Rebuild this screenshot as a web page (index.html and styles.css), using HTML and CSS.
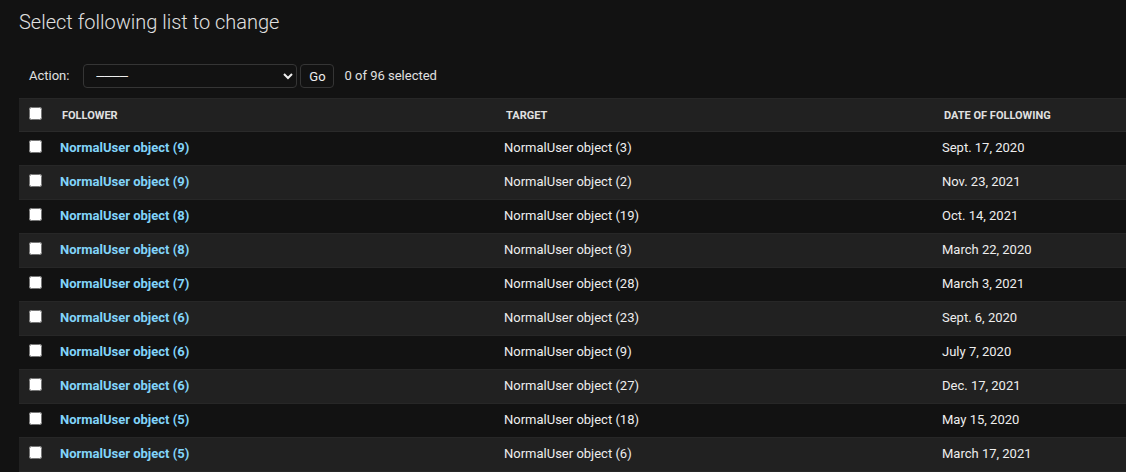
FILE: index.html
```html
<!DOCTYPE html>
<html lang="en">
<head>
<meta charset="utf-8">
<title>Select following list to change</title>
<link rel="stylesheet" href="styles.css">
</head>
<body>
<div class="content">
  <h1 class="title">Select following list to change</h1>
  <form class="changelist-form">
    <div class="actions">
      <label class="action-label">Action:
        <select class="action-select">
          <option>────</option>
        </select>
      </label>
      <button type="button" class="go-button">Go</button>
      <span class="action-counter">0 of 96 selected</span>
    </div>
    <table class="result-list">
      <colgroup>
        <col class="col-check">
        <col class="col-follower">
        <col class="col-target">
        <col class="col-date">
      </colgroup>
      <thead>
        <tr>
          <th class="check-cell"><input type="checkbox" class="cb"></th>
          <th>Follower</th>
          <th>Target</th>
          <th>Date of following</th>
        </tr>
      </thead>
      <tbody>
        <tr><td class="check-cell"><input type="checkbox" class="cb"></td><th class="link-cell"><a href="#">NormalUser object (9)</a></th><td>NormalUser object (3)</td><td>Sept. 17, 2020</td></tr>
        <tr><td class="check-cell"><input type="checkbox" class="cb"></td><th class="link-cell"><a href="#">NormalUser object (9)</a></th><td>NormalUser object (2)</td><td>Nov. 23, 2021</td></tr>
        <tr><td class="check-cell"><input type="checkbox" class="cb"></td><th class="link-cell"><a href="#">NormalUser object (8)</a></th><td>NormalUser object (19)</td><td>Oct. 14, 2021</td></tr>
        <tr><td class="check-cell"><input type="checkbox" class="cb"></td><th class="link-cell"><a href="#">NormalUser object (8)</a></th><td>NormalUser object (3)</td><td>March 22, 2020</td></tr>
        <tr><td class="check-cell"><input type="checkbox" class="cb"></td><th class="link-cell"><a href="#">NormalUser object (7)</a></th><td>NormalUser object (28)</td><td>March 3, 2021</td></tr>
        <tr><td class="check-cell"><input type="checkbox" class="cb"></td><th class="link-cell"><a href="#">NormalUser object (6)</a></th><td>NormalUser object (23)</td><td>Sept. 6, 2020</td></tr>
        <tr><td class="check-cell"><input type="checkbox" class="cb"></td><th class="link-cell"><a href="#">NormalUser object (6)</a></th><td>NormalUser object (9)</td><td>July 7, 2020</td></tr>
        <tr><td class="check-cell"><input type="checkbox" class="cb"></td><th class="link-cell"><a href="#">NormalUser object (6)</a></th><td>NormalUser object (27)</td><td>Dec. 17, 2021</td></tr>
        <tr><td class="check-cell"><input type="checkbox" class="cb"></td><th class="link-cell"><a href="#">NormalUser object (5)</a></th><td>NormalUser object (18)</td><td>May 15, 2020</td></tr>
        <tr><td class="check-cell"><input type="checkbox" class="cb"></td><th class="link-cell"><a href="#">NormalUser object (5)</a></th><td>NormalUser object (6)</td><td>March 17, 2021</td></tr>
      </tbody>
    </table>
  </form>
</div>
</body>
</html>
```

FILE: styles.css
```css
html, body {
  margin: 0;
  padding: 0;
  background: #121212;
  color: #eeeeee;
  font-family: Roboto, "DejaVu Sans", sans-serif;
  font-size: 13px;
  overflow: hidden;
}

.content {
  padding: 10px 0 0 19px;
}

.title {
  margin: 0 0 20px;
  font-size: 20px;
  line-height: 24px;
  font-weight: 300;
  color: #e0e0e0;
}

.changelist-form {
  margin: 0;
}

.actions {
  display: flex;
  align-items: center;
  padding: 10px;
  height: 24px;
  color: #e0e0e0;
  line-height: 24px;
}

.action-label {
  display: flex;
  align-items: center;
  gap: 14px;
  font-size: 13px;
}

.action-select {
  color-scheme: dark;
  box-sizing: border-box;
  width: 214px;
  height: 24px;
  margin: 0;
  padding: 0 6px 0 8px;
  background: #121212;
  color: #eeeeee;
  border: 1px solid #353535;
  border-radius: 4px;
  font-family: "DejaVu Sans", Roboto, sans-serif;
  font-size: 13px;
}

.go-button {
  box-sizing: border-box;
  height: 24px;
  width: 34px;
  margin: 0 0 0 3px;
  padding: 2px 0 0;
  background: #121212;
  color: #eeeeee;
  border: 1px solid #353535;
  border-radius: 4px;
  font-family: Roboto, "DejaVu Sans", sans-serif;
  font-size: 13px;
  line-height: 20px;
}

.action-counter {
  margin-left: 10px;
  font-size: 13px;
  color: #e0e0e0;
}

.result-list {
  width: 100%;
  table-layout: fixed;
  border-collapse: collapse;
}

.col-check { width: 33px; }
.col-follower { width: 444px; }
.col-target { width: 438px; }

.result-list thead th {
  box-sizing: border-box;
  height: 33px;
  padding: 0 10px;
  background: #212121;
  border-top: 1px solid #272727;
  border-bottom: 1px solid #2a2a2a;
  text-align: left;
  vertical-align: middle;
  font-size: 11px;
  font-weight: 700;
  text-transform: uppercase;
  color: #e0e0e0;
  white-space: nowrap;
}

.result-list tbody td,
.result-list tbody th {
  padding: 8px 8px 9px;
  height: 16px;
  line-height: 16px;
  font-size: 13px;
  text-align: left;
  vertical-align: top;
  border-bottom: 1px solid #272727;
  color: #eeeeee;
  white-space: nowrap;
}

.result-list tbody tr:nth-child(even) {
  background: #212121;
}

.result-list .check-cell {
  padding-left: 10px;
  padding-right: 10px;
}

.result-list thead th.check-cell {
  vertical-align: top;
  padding-top: 8px;
}

.cb {
  display: block;
  width: 13px;
  height: 13px;
  margin: 0;
}

.link-cell a {
  color: #81d4fa;
  font-weight: 700;
  text-decoration: none;
}
```
